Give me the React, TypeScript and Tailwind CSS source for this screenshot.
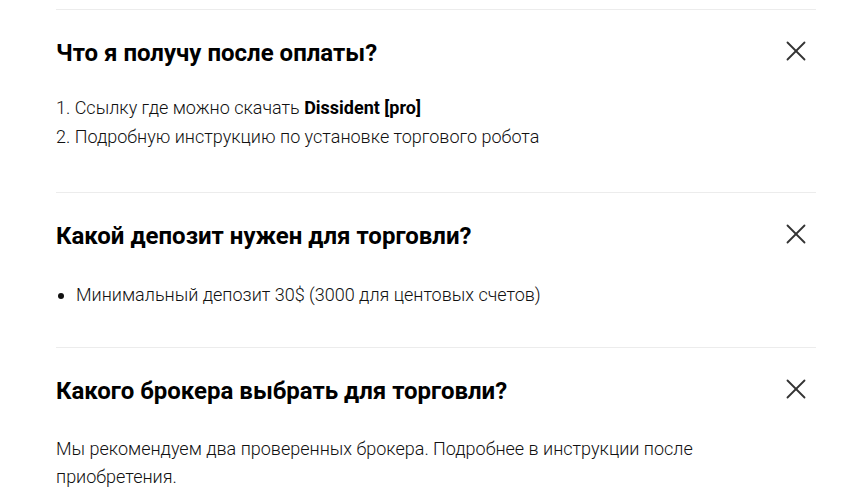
import { X } from "lucide-react";

const font = { fontFamily: "Roboto, 'Liberation Sans', sans-serif" };

function Item({ title, children }: { title: string; children: React.ReactNode }) {
    return (
        <div className="border-t border-[#ececec] pt-[28px]">
            <div className="flex h-[30px] items-center justify-between">
                <h3 className="text-[24px] font-bold leading-[30px] text-black">{title}</h3>
                <X className="mb-[4px] mr-[3px] h-[34px] w-[34px] shrink-0 text-[#333]" strokeWidth={1.3} />
            </div>
            {children}
        </div>
    );
}

export default function App() {
    return (
        <div className="min-h-screen bg-white pt-[9px]" style={font}>
            <div className="ml-[56px] w-[760px]">
                <Item title="Что я получу после оплаты?">
                    <div className="mt-[25px] pb-[41px] text-[18px] font-light leading-[29px] text-[#111]">
                        <p>
                            1. Ссылку где можно скачать{" "}
                            <span className="font-bold text-black">Dissident [pro]</span>
                        </p>
                        <p>2. Подробную инструкцию по установке торгового робота</p>
                    </div>
                </Item>
                <Item title="Какой депозит нужен для торговли?">
                    <ul className="mt-[30px] list-disc pb-[38px] pl-[20px] text-[18px] font-light leading-[28px] text-[#111]">
                        <li>Минимальный депозит 30$ (3000 для центовых счетов)</li>
                    </ul>
                </Item>
                <Item title="Какого брокера выбрать для торговли?">
                    <p className="mt-[29px] text-[18px] font-light leading-[28px] text-[#111]">
                        Мы рекомендуем два проверенных брокера. Подробнее в инструкции после
                        <br />
                        приобретения.
                    </p>
                </Item>
            </div>
        </div>
    );
}
